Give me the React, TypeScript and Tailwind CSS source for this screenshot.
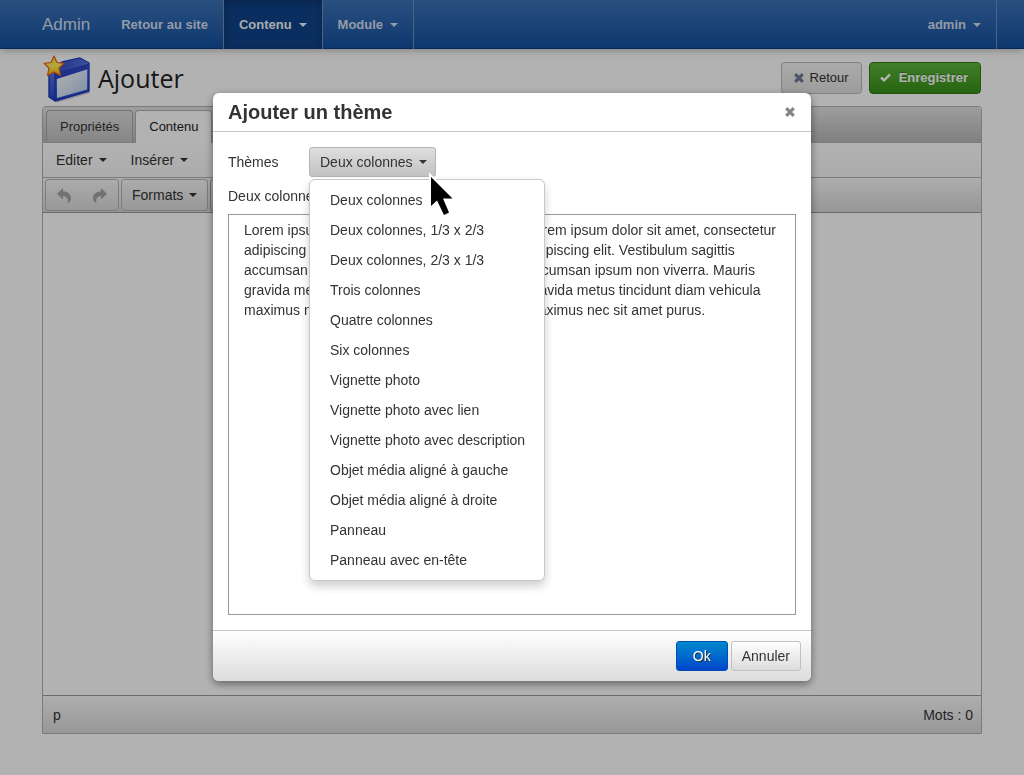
import React from "react";

const themes = [
  "Deux colonnes",
  "Deux colonnes, 1/3 x 2/3",
  "Deux colonnes, 2/3 x 1/3",
  "Trois colonnes",
  "Quatre colonnes",
  "Six colonnes",
  "Vignette photo",
  "Vignette photo avec lien",
  "Vignette photo avec description",
  "Objet média aligné à gauche",
  "Objet média aligné à droite",
  "Panneau",
  "Panneau avec en-tête",
];

const lorem =
  "Lorem ipsum dolor sit amet, consectetur adipiscing elit. Vestibulum sagittis accumsan ipsum non viverra. Mauris gravida metus tincidunt diam vehicula maximus nec sit amet purus.";

function Caret() {
  return (
    <span
      aria-hidden="true"
      className="inline-block h-0 w-0 border-x-4 border-t-4 border-x-transparent border-t-current"
    />
  );
}

function BoxIcon() {
  return (
    <svg width="50" height="50" viewBox="0 0 50 50" aria-hidden="true">
      <defs>
        <linearGradient id="side" x1="0" y1="0" x2="0" y2="1">
          <stop offset="0" stopColor="#6f8df0" />
          <stop offset="1" stopColor="#2344c4" />
        </linearGradient>
        <linearGradient id="lid" x1="0" y1="0" x2="1" y2="0">
          <stop offset="0" stopColor="#2c46c0" />
          <stop offset="1" stopColor="#5873dc" />
        </linearGradient>
        <linearGradient id="pane" x1="0" y1="0" x2="1" y2="1">
          <stop offset="0" stopColor="#ffffff" />
          <stop offset="1" stopColor="#b4cdee" />
        </linearGradient>
        <linearGradient id="star" x1="0" y1="0" x2="0" y2="1">
          <stop offset="0" stopColor="#ffd21e" />
          <stop offset=".5" stopColor="#fff25a" />
          <stop offset="1" stopColor="#ffb400" />
        </linearGradient>
      </defs>
      <path d="M13 47 46 38 48 40 15 49.500Z" fill="#000" opacity=".2" />
      <path d="M7 16 20 9 38 5 47 10 47 38 13 48 7 44Z" fill="url(#side)" stroke="#1d38bd" strokeWidth="1.400" strokeLinejoin="round" />
      <path d="M8 16 20 9.500 38 5.500 46 10 13 20Z" fill="url(#lid)" />
      <path d="M13 19.500 46.500 10.500 46.500 16 13 26.500Z" fill="#2c45c2" />
      <path d="M15 26 45 16.500 45 36.500 15 45Z" fill="url(#pane)" />
      <path d="M13 20V47" stroke="#1c38bf" strokeWidth="1.200" />
      <path d="M12 3 15 9.500 22 10.300 17 15 18.500 22.500 12 19 5.500 22.500 7 15 2 10.300 9 9.500Z" fill="url(#star)" stroke="#e8641c" strokeWidth="1.200" strokeLinejoin="round" />
    </svg>
  );
}

function CrossIcon() {
  return (
    <svg width="10" height="10" viewBox="0 0 10 10" aria-hidden="true">
      <path d="M1.200 1.200 8.800 8.800M8.800 1.200 1.200 8.800" fill="none" stroke="currentColor" strokeWidth="3.200" />
    </svg>
  );
}

function CheckIcon() {
  return (
    <svg width="11" height="9" viewBox="0 0 11 9" aria-hidden="true">
      <path d="M1 4.500 4 7.300 10 1.300" fill="none" stroke="currentColor" strokeWidth="2.400" />
    </svg>
  );
}

function UndoIcon() {
  return (
    <svg width="14" height="15" viewBox="0 0 14 15" aria-hidden="true">
      <path d="M6 0V3.300C11 3.500 14 6.500 14 10.200C14 12.500 12.500 14.500 10.500 15C11.500 11.500 10 8.200 6 8V11.500L0 5.700Z" fill="currentColor" />
    </svg>
  );
}

function RedoIcon() {
  return (
    <svg width="14" height="15" viewBox="0 0 14 15" aria-hidden="true">
      <path d="M8 0V3.300C3 3.500 0 6.500 0 10.200C0 12.500 1.500 14.500 3.500 15C2.500 11.500 4 8.200 8 8V11.500L14 5.700Z" fill="currentColor" />
    </svg>
  );
}

function PointerIcon() {
  return (
    <svg width="30" height="50" viewBox="0 0 30 50" className="overflow-visible" aria-hidden="true">
      <path d="M4 8V37L10 31.500 17 46 22 43.500 16 29.500H25.500Z" fill="#000" stroke="#fff" strokeWidth="4" strokeLinejoin="miter" strokeMiterlimit="6" paintOrder="stroke" />
    </svg>
  );
}

export default function App() {
  return (
    <div className="flex min-h-screen flex-col bg-white font-['Liberation_Sans',Arial,sans-serif] text-sm leading-5 text-[#333]">
      <header className="bg-linear-to-b from-[#3d73b6] to-[#114fa0] px-[42px] shadow-[inset_0_-1px_0_#0a3c80,0_1px_8px_rgba(0,0,0,0.3)]">
        <nav className="mx-auto flex h-[49px] max-w-[940px] items-stretch text-[13px] font-bold text-[#d3dfee]">
          <a href="#admin" className="mr-4 flex items-center text-[17px] font-normal">
            Admin
          </a>
          <a href="#site" className="flex items-center px-[15px]">
            Retour au site
          </a>
          <button type="button" className="flex items-center gap-[7px] border-l border-[#6d90bb] bg-[#0f4389] px-[15px] text-[#f0f4fa] shadow-[inset_0_2px_8px_rgba(0,0,0,0.25)]">
            Contenu <Caret />
          </button>
          <button type="button" className="flex items-center gap-[7px] border-x border-[#6d90bb] px-[15px]">
            Module <Caret />
          </button>
          <button type="button" className="-mr-[15px] ml-auto flex items-center gap-[7px] border-r border-[#6d90bb] px-[15px]">
            admin <Caret />
          </button>
        </nav>
      </header>

      <main className="mx-auto w-full max-w-[1024px] px-[42px]">
        <div className="flex h-[57px] items-center justify-between">
          <h1 className="flex items-center gap-1.5 font-['Open_Sans','Noto_Sans',sans-serif] text-[25px] text-[#222]">
            <BoxIcon />
            Ajouter
          </h1>
          <div className="flex gap-[7px] pr-px">
            <button type="button" className="flex h-8 items-center gap-1.5 rounded-[4px] border border-[#b8b8b8] bg-linear-to-b from-[#f4f4f4] to-[#e0e0e0] px-3 text-[13px] text-[#333]">
              <span className="text-[#6c7c96]"><CrossIcon /></span>
              Retour
            </button>
            <button type="button" className="flex h-8 items-center gap-2 rounded-[4px] border border-[#2d7c12] bg-linear-to-b from-[#5db73b] to-[#368f17] pr-3 pl-[10px] text-[13px] font-bold text-white [text-shadow:0_-1px_0_rgba(0,0,0,0.25)]">
              <CheckIcon />
              Enregistrer
            </button>
          </div>
        </div>

        <section className="rounded-t-[4px] border border-[#b0b0b0]">
          <div className="flex h-9 items-end gap-0.5 rounded-t-[4px] border-b border-[#b0b0b0] bg-linear-to-b from-[#e2e2e2] to-[#b8b8b8] px-[3px] text-[13px]">
            <button type="button" className="h-8 rounded-t-[4px] border border-b-0 border-[#a6a6a6] bg-linear-to-b from-[#dedede] to-[#c0c0c0] px-[13px]">
              Propriétés
            </button>
            <button type="button" className="-mb-px h-[33px] rounded-t-[4px] border border-b-0 border-[#b0b0b0] bg-white px-[13px] text-[#222]">
              Contenu
            </button>
          </div>
          <div className="flex h-[35px] items-center gap-6 border-b border-[#b0b0b0] bg-linear-to-b from-white to-[#f6f6f6] px-[13px]">
            <button type="button" className="flex items-center gap-1.5">Editer <Caret /></button>
            <button type="button" className="flex items-center gap-1.5">Insérer <Caret /></button>
          </div>
          <div className="flex h-[35px] items-center gap-0.5 border-b border-[#9a9a9a] bg-linear-to-b from-[#f8f8f8] to-[#d8d8d8] px-0.5">
            <div className="flex h-8 items-center gap-[22px] rounded-[3px] border border-[#b4b4b4] px-[11px] text-[#a4a4a4]">
              <button type="button" aria-label="Annuler la frappe"><UndoIcon /></button>
              <button type="button" aria-label="Rétablir"><RedoIcon /></button>
            </div>
            <button type="button" className="flex h-8 items-center gap-1.5 rounded-[3px] border border-[#b4b4b4] px-[10px]">
              Formats <Caret />
            </button>
            <div aria-hidden="true" className="h-8 w-24 rounded-[3px] border border-[#a0a0a0]" />
          </div>
          <div className="h-[482px]" />
          <div className="flex h-[38px] items-center justify-between border-t border-[#9a9a9a] bg-linear-to-b from-[#fafafa] to-[#d9d9d9] pr-2 pl-[10px]">
            <span>p</span>
            <span>Mots : 0</span>
          </div>
        </section>
      </main>

      <div className="fixed inset-0 flex items-start justify-center overflow-auto bg-black/30 pt-[93px]">
        <div role="dialog" aria-modal="true" aria-labelledby="dialog-title" className="w-full max-w-[598px] rounded-[6px] bg-white shadow-[0_3px_8px_rgba(0,0,0,0.45)]">
          <div className="flex h-[39px] items-center justify-between border-b border-[#c5c5c5] pr-4 pl-[15px]">
            <h2 id="dialog-title" className="text-xl font-bold">Ajouter un thème</h2>
            <button type="button" aria-label="Fermer" className="text-[#858585]"><CrossIcon /></button>
          </div>

          <div className="p-[15px]">
            <div className="flex items-center">
              <label htmlFor="theme" className="w-[81px]">Thèmes</label>
              <div className="relative">
                <button id="theme" type="button" aria-haspopup="menu" aria-expanded="true" className="flex h-[30px] items-center gap-1.5 rounded-[3px] border border-[#b4b4b4] bg-linear-to-b from-[#dedede] to-[#c2c2c2] px-2 pl-[10px]">
                  Deux colonnes <Caret />
                </button>
                <ul role="menu" className="absolute top-8 left-0 z-10 w-[236px] rounded-[6px] border border-[#c8c8c8] bg-white py-[5px] shadow-[0_5px_10px_rgba(0,0,0,0.2)]">
                  {themes.map((theme) => (
                    <li key={theme} role="none">
                      <button type="button" role="menuitem" className="block h-[30px] w-full px-5 text-left whitespace-nowrap">
                        {theme}
                      </button>
                    </li>
                  ))}
                </ul>
                <div className="pointer-events-none absolute top-[22px] left-[118px] z-20">
                  <PointerIcon />
                </div>
              </div>
            </div>
            <p className="mt-[9px] mb-2">Deux colonnes</p>
            <div className="grid h-[401px] grid-cols-2 content-start border border-[#999] py-[5px]">
              <p className="px-[15px]">{lorem}</p>
              <p className="px-[15px]">{lorem}</p>
            </div>
          </div>

          <div className="flex justify-end gap-[3px] rounded-b-[6px] border-t border-[#c5c5c5] bg-linear-to-b from-white to-[#dcdcdc] p-[10px]">
            <button type="button" className="h-[30px] rounded-[3px] border border-[#0050b4] bg-linear-to-b from-[#0088cc] to-[#0044cc] px-4 text-white [text-shadow:1px_1px_0_#333]">
              Ok
            </button>
            <button type="button" className="h-[30px] rounded-[3px] border border-[#c0c0c0] bg-linear-to-b from-white to-[#dcdcdc] px-[10px]">
              Annuler
            </button>
          </div>
        </div>
      </div>
    </div>
  );
}
